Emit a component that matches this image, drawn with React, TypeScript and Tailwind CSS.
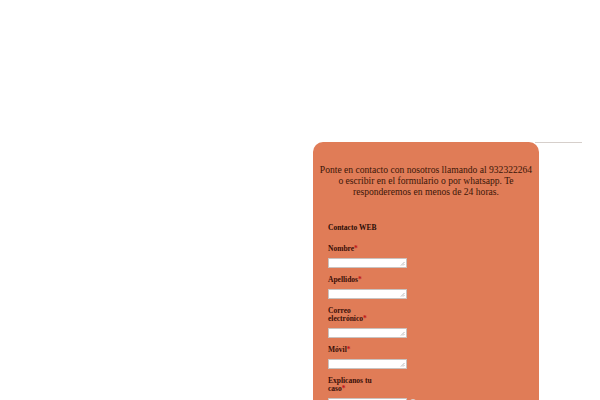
import React from "react";

function Field({ label, extraTop }: { label: React.ReactNode; extraTop?: boolean }) {
  return (
    <div className="flex flex-col">
      <div className="w-[54px] text-[7.5px] leading-[8px] font-bold text-[#3a0f08]">
        {label}
        <span className="text-[#c0141a]">*</span>
      </div>
      <div className="mt-[5px] flex items-center">
        <div className="relative h-[10px] w-[79px] bg-white border border-[#c9c2bf]">
          <svg className="absolute right-[1px] bottom-[1px]" width="5" height="5" viewBox="0 0 5 5">
            <path d="M4.5 1 L1 4.5 M4.5 3 L3 4.5" stroke="#8a8a8a" strokeWidth="0.6" />
          </svg>
        </div>
        {extraTop && (
          <div className="ml-[2px] h-[8px] w-[8px] rounded-full bg-white border border-[#d8d0cc]" />
        )}
      </div>
    </div>
  );
}

export default function App() {
  return (
    <div className="w-[600px] h-[400px] bg-white overflow-hidden" style={{ fontFamily: '"Liberation Serif", "DejaVu Serif", serif' }}>
      <div className="ml-[313px] pt-[142px] flex items-start">
        <div className="w-[226px] h-[300px] bg-[#e07c57] rounded-[10px] pt-[22px] px-[4px]">
          <p className="text-center text-[9.6px] leading-[11px] text-[#3a1608]">
            Ponte en contacto con nosotros llamando al 932322264 o escribir en el formulario o por whatsapp. Te responderemos en menos de 24 horas.
          </p>
          <div className="pl-[11px] pt-[26px]">
            <div className="text-[7.5px] leading-[10px] font-bold text-[#2a0c06]">Contacto WEB</div>
            <div className="mt-[12px] flex flex-col gap-[8px]">
              <Field label="Nombre" />
              <Field label="Apellidos" />
              <Field label="Correo electrónico" />
              <Field label="Móvil" />
              <Field label="Explicanos tu caso" extraTop />
            </div>
          </div>
        </div>
        <div className="-ml-[4px] w-[47px] border-t border-[#d6cfcb]" />
      </div>
    </div>
  );
}
